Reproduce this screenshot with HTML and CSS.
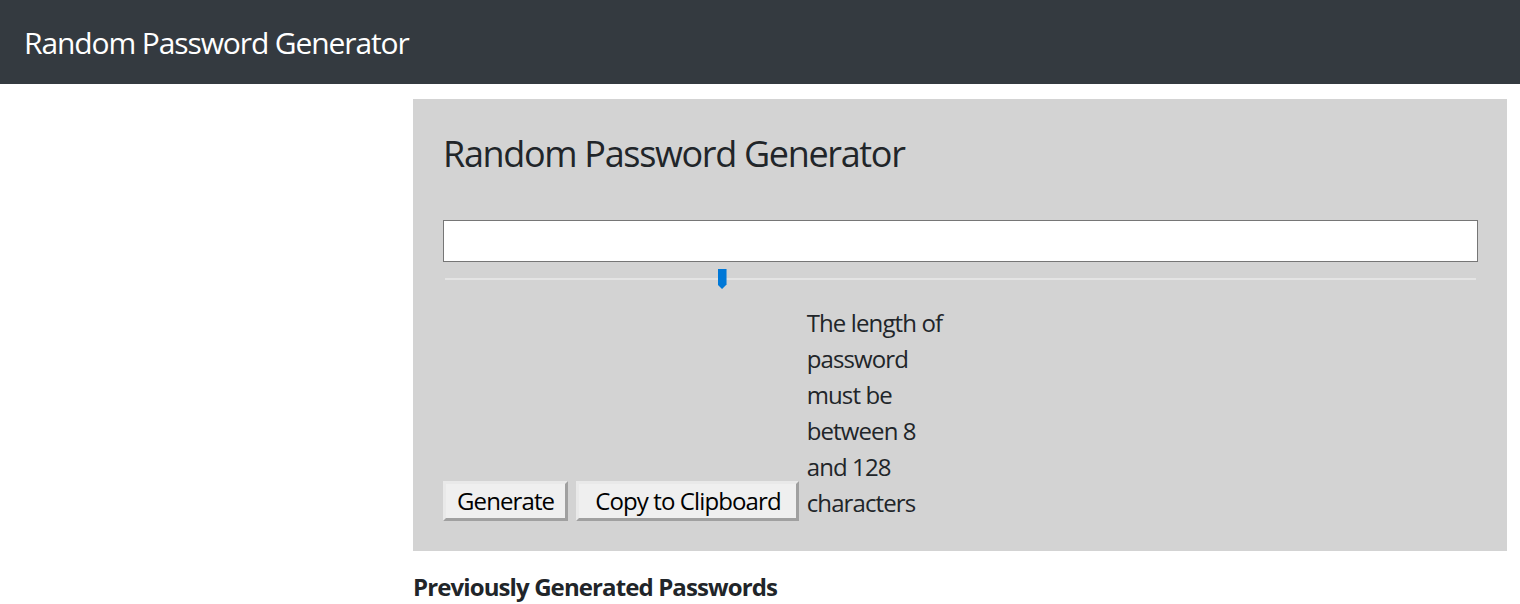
FILE: index.html
```html
<!DOCTYPE html>
<html lang="en">
<head>
<meta charset="utf-8">
<title>Random Password Generator</title>
<link rel="stylesheet" href="styles.css">
</head>
<body>
<nav class="navbar">
  <span class="brand">Random Password Generator</span>
</nav>
<main class="page">
  <section class="card">
    <h1 class="card-title">Random Password Generator</h1>
    <input class="password" type="text" readonly>
    <input class="length" type="range" min="8" max="128" value="40">
    <div class="controls">
      <button class="btn" type="button">Generate</button>
      <button class="btn btn-copy" type="button">Copy to Clipboard</button>
      <p class="hint">The length of password must be between 8 and 128 characters</p>
    </div>
  </section>
  <h2 class="history-title">Previously Generated Passwords</h2>
</main>
</body>
</html>
```
FILE: styles.css
```css
* {
  box-sizing: border-box;
}

body {
  margin: 0;
  font-family: "Open Sans", "Noto Sans", sans-serif;
  line-height: 1.5;
  color: #212529;
  background: #fff;
}

.navbar {
  display: flex;
  align-items: center;
  height: 84px;
  padding: 0 24px;
  background: #343a40;
}

.brand {
  font-size: 30px;
  letter-spacing: -0.037em;
  color: #fff;
  line-height: 45px;
}

.page {
  padding: 15px 13px 0 413px;
}

.card {
  background: #d3d3d3;
  padding: 30px 29px 30px 30px;
}

.card-title {
  margin: 0;
  font-size: 36px;
  font-weight: 400;
  letter-spacing: -0.037em;
  line-height: 1.2;
  padding-top: 3px;
  height: 91px;
}

.password {
  display: block;
  width: 100%;
  height: 42px;
  border: 1px solid #767676;
  background: #fff;
  margin: 0;
}

.length {
  -webkit-appearance: none;
  appearance: none;
  display: block;
  width: 1031px;
  height: 20px;
  margin: 7px 2px 16px;
  padding: 0;
  background: transparent;
}

.length::-webkit-slider-runnable-track {
  height: 2px;
  background: #e4e4e4;
}

.length::-webkit-slider-thumb {
  -webkit-appearance: none;
  appearance: none;
  width: 9px;
  height: 20px;
  margin-top: -9px;
  background: #0078d7;
  border: none;
  clip-path: polygon(0 0, 100% 0, 100% 78%, 50% 100%, 0 78%);
}

.controls {
  display: flex;
  align-items: flex-end;
  gap: 8px;
}

.btn {
  height: 40px;
  padding: 0 11px;
  font-family: inherit;
  font-size: 24px;
  letter-spacing: -0.037em;
  line-height: 1;
  color: #000;
  background: #efefef;
  border: 3px solid;
  border-color: #e9e9e9 #a0a0a0 #a0a0a0 #e9e9e9;
}

.btn-copy {
  padding: 0 15px 0 16px;
}

.hint {
  width: 150px;
  margin: 0;
  font-size: 24px;
  letter-spacing: -0.037em;
  line-height: 36px;
}

.history-title {
  margin: 18px 0 0;
  font-size: 24px;
  font-weight: 700;
  letter-spacing: -0.037em;
  line-height: 36px;
}
```
